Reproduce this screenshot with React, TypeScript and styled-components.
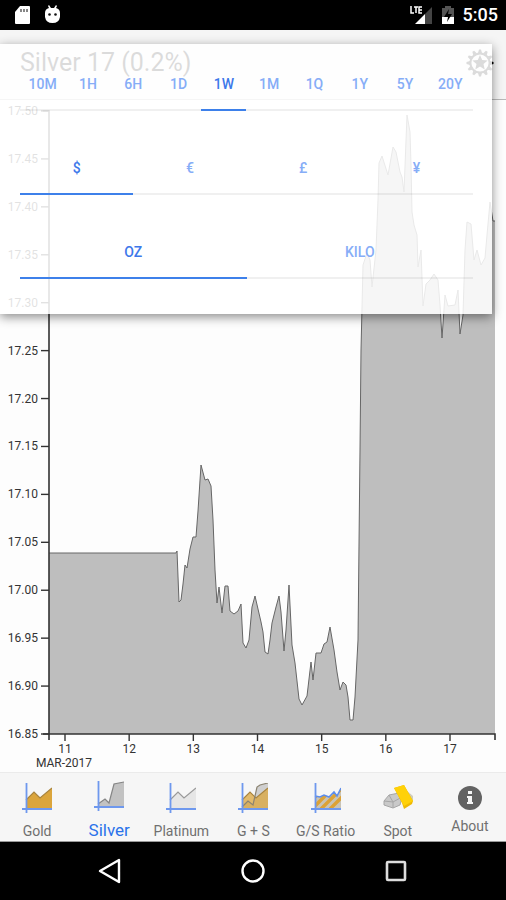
import React, { useState } from "react";
import styled, { createGlobalStyle } from "styled-components";

const GlobalStyle = createGlobalStyle`
  * { box-sizing: border-box; }
  body { margin: 0; background: #fff; font-family: Roboto, "Liberation Sans", sans-serif; }
  button { font: inherit; border: 0; background: none; padding: 0; cursor: pointer; }
`;

const Screen = styled.div`
  min-height: 100vh;
  display: flex;
  flex-direction: column;
`;

const StatusBar = styled.div`
  height: 30px;
  padding: 0 8px 0 14px;
  background: #000;
  color: #fff;
  display: flex;
  align-items: center;
  justify-content: space-between;
`;

const StatusGroup = styled.div<{ $gap: number }>`
  display: flex;
  align-items: center;
  gap: ${(p) => p.$gap}px;
`;

const Clock = styled.time`
  font-size: 18px;
  line-height: 30px;
  font-weight: 500;
`;

const Main = styled.main`
  position: relative;
  flex: 1;
  display: flex;
  flex-direction: column;
`;

const Header = styled.header`
  height: 70px;
  padding: 0 12px 3px 20px;
  background: #f5f5f5;
  border-bottom: 1px solid #b8b8b8;
  box-shadow: 0 1px 2px rgba(0, 0, 0, 0.12);
  display: flex;
  align-items: center;
  justify-content: space-between;
`;

const Title = styled.h1`
  margin: 0;
  font-size: 25px;
  line-height: 32px;
  font-weight: 400;
  color: #000;
`;

const IconButton = styled.button`
  display: flex;
  color: #000;
`;

const ChartArea = styled.section`
  flex: 1;
  background: #fdfdfd;
`;

const ChartSvg = styled.svg`
  display: block;
  width: 100%;
  height: auto;
  font-size: 12px;
  fill: #333;
`;

const Panel = styled.div`
  position: absolute;
  top: 14px;
  left: 0;
  right: 14px;
  padding: 0 19px 35px 20px;
  background: rgba(255, 255, 255, 0.86);
  box-shadow: 0 3px 10px rgba(0, 0, 0, 0.45);
`;

const OptionRow = styled.div<{ $first?: boolean }>`
  height: ${(p) => (p.$first ? 67 : 84)}px;
  display: flex;
  align-items: flex-end;
`;

const Option = styled.button<{ $active: boolean }>`
  flex: 1;
  padding-bottom: 15px;
  border-bottom: 2px solid ${(p) => (p.$active ? "#3d80ea" : "rgba(0, 0, 0, 0.06)")};
  color: ${(p) => (p.$active ? "#3d78ea" : "#86adf7")};
  font-size: 14px;
  line-height: 20px;
  font-weight: 500;
`;

const TabBar = styled.nav`
  height: 70px;
  padding: 10px 0 0 1px;
  background: #f6f6f6;
  border-top: 1px solid #ebebeb;
  border-bottom: 1px solid #999;
  display: flex;
  align-items: flex-start;
`;

const Tab = styled.button<{ $active: boolean }>`
  flex: 1;
  height: 58px;
  display: flex;
  flex-direction: column;
  align-items: center;
  justify-content: space-between;
  white-space: nowrap;
  color: ${(p) => (p.$active ? "#2a72ea" : "#707070")};
  font-size: ${(p) => (p.$active ? 17 : 14)}px;
  line-height: 20px;
`;

const ShortTab = styled(Tab)`
  height: 53px;
  padding-top: 3px;
`;

const ActiveTab = styled(Tab)`
  height: 59px;
  margin-top: -2px;
`;

const SystemBar = styled.div`
  height: 58px;
  background: #000;
  display: flex;
  align-items: center;
  justify-content: center;
  gap: 117px;
`;

const POINTS: [number, number][] = [
  [49, 553], [176, 553], [177, 551], [179, 602], [181, 600], [183, 584], [185, 565], [187, 568],
  [190, 549], [193, 537], [196, 537], [198, 511], [201, 465], [205, 480], [208, 479], [211, 486],
  [213, 520], [215, 570], [217, 603], [219, 587], [222, 613], [225, 586], [228, 586], [230, 611],
  [234, 614], [238, 611], [241, 604], [243, 643], [246, 648], [249, 640], [252, 607], [255, 596],
  [261, 622], [263, 632], [265, 652], [268, 654], [270, 640], [272, 623], [276, 607], [279, 596],
  [281, 612], [284, 651], [286, 630], [289, 585], [292, 645], [295, 663], [299, 699], [302, 705],
  [307, 696], [311, 662], [313, 680], [316, 653], [321, 653], [324, 644], [327, 642], [330, 627],
  [334, 650], [337, 672], [340, 690], [343, 682], [346, 685], [348, 697], [350, 720], [353, 720],
  [355, 697], [358, 640], [360, 450], [361, 350], [363, 265], [367, 253], [370, 260], [372, 287],
  [376, 250], [378, 200], [379, 163], [382, 156], [388, 175], [393, 147], [396, 152], [400, 172],
  [402, 177], [404, 192], [407, 115], [410, 132], [411, 165], [412, 212], [414, 225], [417, 235],
  [418, 267], [421, 250], [423, 306], [426, 284], [430, 280], [434, 274], [438, 280], [440, 305],
  [442, 338], [445, 295], [448, 306], [455, 305], [458, 290], [460, 334], [463, 315], [465, 250],
  [467, 222], [471, 224], [474, 260], [477, 250], [481, 265], [485, 258], [487, 235], [490, 202],
  [493, 221], [495, 221],
];
const LINE = POINTS.map((p) => p.join(",")).join(" ");
const PRICES = Array.from({ length: 14 }, (_, i) => (17.5 - i * 0.05).toFixed(2));
const DAYS = [11, 12, 13, 14, 15, 16, 17];

function PriceChart() {
  return (
    <ChartSvg viewBox="0 100 506 672" role="img" aria-label="Silver price, one week">
      <polygon points={`49,734 ${LINE} 495,734`} fill="#bebebe" />
      <polyline points={LINE} fill="none" stroke="#666" strokeWidth="1" />
      <path d="M43 111H49V740M43 734H495V740" fill="none" stroke="#333" strokeWidth="1.6" />
      {PRICES.map((price, i) => {
        const y = 111 + (i * 623) / 13;
        return (
          <g key={price}>
            <path d={`M41 ${y}H49`} stroke="#333" strokeWidth="1.4" />
            <text x="38" y={y + 4} textAnchor="end">{price}</text>
          </g>
        );
      })}
      {DAYS.map((day, i) => {
        const x = 65 + (i * 385) / 6;
        return (
          <g key={day}>
            <path d={`M${x} 734V741`} stroke="#333" strokeWidth="1.4" />
            <text x={x} y="753" textAnchor="middle">{day}</text>
          </g>
        );
      })}
      <text x="64" y="767" textAnchor="middle">MAR-2017</text>
    </ChartSvg>
  );
}

function StarGear() {
  const teeth = Array.from({ length: 12 }, (_, i) => i * 30);
  return (
    <svg width="28" height="28" viewBox="-14 -14 28 28" aria-hidden="true">
      {teeth.map((a) => (
        <path key={a} d="M-2 -10L-1 -13.5H1L2 -10Z" fill="currentColor" transform={`rotate(${a})`} />
      ))}
      <circle r="9.6" fill="none" stroke="currentColor" strokeWidth="2" />
      <path
        d="M0 -8L2.2 -2.9L7.6 -2.5L3.5 1.1L4.7 6.5L0 3.6L-4.7 6.5L-3.5 1.1L-7.6 -2.5L-2.2 -2.9Z"
        fill="currentColor"
      />
    </svg>
  );
}

function Axes() {
  return <path d="M4.5 0V30M0 26H30" fill="none" stroke="#6e98ee" strokeWidth="1.8" />;
}

function AreaIcon({ line, fill, stroke }: { line: string; fill: string; stroke: string }) {
  return (
    <svg width="30" height="30" viewBox="0 0 30 30" aria-hidden="true">
      <path d={`M4 26L${line}V26Z`} fill={fill} />
      <path d={`M${line}`} fill="none" stroke={stroke} strokeWidth="1.2" />
      <Axes />
    </svg>
  );
}

function PairIcon() {
  return (
    <svg width="30" height="30" viewBox="0 0 30 30" aria-hidden="true">
      <path d="M4 24L10 18L15 22L19 4L22 2L30 0V26H4Z" fill="#cfcfcf" />
      <path d="M4 26V17L12 9L18 15L30 5V26Z" fill="#dba53c" fillOpacity="0.75" />
      <path d="M4 17L12 9L18 15L30 5" fill="none" stroke="#a8843e" strokeWidth="1.2" />
      <path d="M4 24L10 18L15 22L19 4L22 2L30 0" fill="none" stroke="#8b8371" strokeWidth="1.2" />
      <Axes />
    </svg>
  );
}

function RatioIcon() {
  return (
    <svg width="30" height="30" viewBox="0 0 30 30" aria-hidden="true">
      <defs>
        <clipPath id="ratio-area">
          <path d="M4 26V13L9 14L13 12L18 14L23 9L26 13L30 5V26Z" />
        </clipPath>
      </defs>
      <g clipPath="url(#ratio-area)">
        <path d="M4 0H30V26H4Z" fill="#c9c4b6" />
        <path d="M-8 26L12 6M1 26L21 6M10 26L30 6M19 26L39 6" stroke="#dca236" strokeWidth="3.4" />
      </g>
      <path d="M4 13L9 14L13 12L18 14L23 9L26 13L30 5" fill="none" stroke="#5c8dec" strokeWidth="1.5" />
      <Axes />
    </svg>
  );
}

function BarsIcon() {
  return (
    <svg width="30" height="30" viewBox="0 0 30 30" aria-hidden="true">
      <path d="M24 8L30 13V18L27 20Z" fill="#d0cdbb" />
      <path d="M1 18L6 12L16 10L19 14L17 22L10 25L1 22Z" fill="#c9c9c9" stroke="#a6a6a6" />
      <path d="M1 18L10 19L19 14M10 19V25M6 12L10 19" fill="none" stroke="#a6a6a6" />
      <path d="M11 5L21 2L30 18L29 21L21 26L19 20Z" fill="#efb904" />
      <path d="M11 5L21 2L30 18L21 23Z" fill="#ffd108" />
    </svg>
  );
}

function InfoIcon() {
  return (
    <svg width="24" height="24" viewBox="0 0 24 24" aria-hidden="true">
      <circle cx="12" cy="12" r="12" fill="#636363" />
      <path d="M10 5H14V8H10ZM9 10H14V16H15V18H9V16H10V12H9Z" fill="#f6f6f6" />
    </svg>
  );
}

function Options({ label, items, initial, first }: { label: string; items: string[]; initial: string; first?: boolean }) {
  const [value, setValue] = useState(initial);
  return (
    <OptionRow $first={first} role="group" aria-label={label}>
      {items.map((item) => (
        <Option key={item} $active={item === value} aria-pressed={item === value} onClick={() => setValue(item)}>
          {item}
        </Option>
      ))}
    </OptionRow>
  );
}

export default function App() {
  return (
    <Screen>
      <GlobalStyle />
      <StatusBar>
        <StatusGroup $gap={13}>
          <svg width="17" height="20" viewBox="0 0 17 20" aria-label="SD card">
            <path d="M6 1H15Q16 1 16 2V18Q16 19 15 19H2Q1 19 1 18V7Z" fill="#fff" />
            <path d="M7 4V7M10 4V7M13 4V7" stroke="#555" strokeWidth="1.4" />
          </svg>
          <svg width="17" height="20" viewBox="0 0 17 20" aria-label="Debugging">
            <path d="M1 8Q1 4 5 3L4 1L5 0L7 3H10L12 0L13 1L12 3Q16 4 16 8V12Q15 18 8.5 18Q2 18 1 12Z" fill="#fff" />
            <circle cx="5.5" cy="9.5" r="1.3" fill="#111" />
            <circle cx="11.5" cy="9.5" r="1.3" fill="#111" />
          </svg>
        </StatusGroup>
        <StatusGroup $gap={8}>
          <svg width="24" height="20" viewBox="0 0 24 20" aria-label="LTE signal">
            <path d="M16 9L23 2V19H16Z" fill="#444" />
            <path d="M6 19L16 9V19Z" fill="#fff" />
            <path d="M2 1V8H5M5 2H9M7 2V8M13 2H10V8H13M10 5H13" fill="none" stroke="#fff" strokeWidth="1.5" />
          </svg>
          <svg width="14" height="20" viewBox="0 0 14 20" aria-label="Battery charging">
            <path d="M1 3H4V1H10V3H13V12H1Z" fill="#555" />
            <path d="M1 12H13V19H1Z" fill="#fff" />
            <path d="M8 4L3 12H7L6 17L11 9H7Z" fill="#000" />
          </svg>
          <Clock>5:05</Clock>
        </StatusGroup>
      </StatusBar>
      <Main>
        <Header>
          <Title>Silver 17 (0.2%)</Title>
          <IconButton aria-label="Settings"><StarGear /></IconButton>
        </Header>
        <ChartArea><PriceChart /></ChartArea>
        <Panel>
          <Options first label="Period" initial="1W" items={["10M", "1H", "6H", "1D", "1W", "1M", "1Q", "1Y", "5Y", "20Y"]} />
          <Options label="Currency" initial="$" items={["$", "€", "£", "¥"]} />
          <Options label="Unit" initial="OZ" items={["OZ", "KILO"]} />
        </Panel>
      </Main>
      <TabBar>
        <Tab $active={false}><AreaIcon line="4 17L12 9L18 15L30 5" fill="#dba53c" stroke="#a8843e" />Gold</Tab>
        <ActiveTab $active aria-current="page"><AreaIcon line="4 23L11 18L15 22L20 3L30 1" fill="#c2c2c2" stroke="#858585" />Silver</ActiveTab>
        <Tab $active={false}><AreaIcon line="4 17L12 9L18 15L30 5" fill="#e6e6e6" stroke="#999" />Platinum</Tab>
        <Tab $active={false}><PairIcon />G + S</Tab>
        <Tab $active={false}><RatioIcon />G/S Ratio</Tab>
        <Tab $active={false}><BarsIcon />Spot</Tab>
        <ShortTab $active={false}><InfoIcon />About</ShortTab>
      </TabBar>
      <SystemBar>
        <IconButton aria-label="Back">
          <svg width="26" height="26" viewBox="0 0 26 26"><path d="M22 2V24L3 13Z" fill="none" stroke="#fff" strokeWidth="2.4" strokeLinejoin="round" /></svg>
        </IconButton>
        <IconButton aria-label="Home">
          <svg width="26" height="26" viewBox="0 0 26 26"><circle cx="13" cy="13" r="10.5" fill="none" stroke="#fff" strokeWidth="2.4" /></svg>
        </IconButton>
        <IconButton aria-label="Recent apps">
          <svg width="26" height="26" viewBox="0 0 26 26"><rect x="4" y="4" width="18" height="18" rx="1" fill="none" stroke="#ddd" strokeWidth="2.6" /></svg>
        </IconButton>
      </SystemBar>
    </Screen>
  );
}
